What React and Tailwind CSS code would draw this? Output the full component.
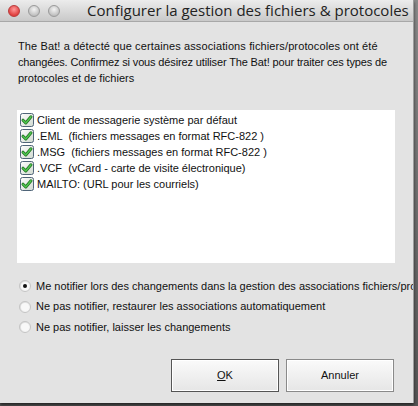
const items = [
  'Client de messagerie système par défaut',
  '.EML  (fichiers messages en format RFC-822 )',
  '.MSG  (fichiers messages en format RFC-822 )',
  '.VCF  (vCard - carte de visite électronique)',
  'MAILTO: (URL pour les courriels)',
]

const radios = [
  'Me notifier lors des changements dans la gestion des associations fichiers/protocoles',
  'Ne pas notifier, restaurer les associations automatiquement',
  'Ne pas notifier, laisser les changements',
]

const CheckBox = () => (
  <svg width="14" height="14" viewBox="0 0 14 14" className="shrink-0">
    <defs>
      <linearGradient id="cbg" x1="0" y1="0" x2="1" y2="1">
        <stop offset="0" stopColor="#ffffff" />
        <stop offset="1" stopColor="#cfd8cf" />
      </linearGradient>
    </defs>
    <rect x="0.5" y="0.5" width="13" height="13" rx="2" fill="url(#cbg)" stroke="#4f6478" />
    <path d="M3 7.2 L5.8 10 L11 3.8" fill="none" stroke="#1d6b1d" strokeWidth="3" strokeLinecap="round" strokeLinejoin="round" />
    <path d="M3 7.2 L5.8 10 L11 3.8" fill="none" stroke="#4fc64f" strokeWidth="1.6" strokeLinecap="round" strokeLinejoin="round" />
  </svg>
)

const Radio = ({ on }) => (
  <svg width="12" height="12" viewBox="0 0 12 12" className="shrink-0">
    <defs>
      <linearGradient id="rbg" x1="0" y1="0" x2="1" y2="1">
        <stop offset="0" stopColor="#d6d6d6" />
        <stop offset="1" stopColor="#ffffff" />
      </linearGradient>
    </defs>
    <circle cx="6" cy="6" r="5.5" fill="url(#rbg)" stroke="#c4c4c4" />
    <circle cx="6" cy="6" r="4" fill="#f8f8f8" />
    {on && <circle cx="6" cy="6" r="2" fill="#111" />}
  </svg>
)

const Light = ({ color }) => (
  <span
    className={`block h-[12px] w-[12px] rounded-full border ${
      color === 'red'
        ? 'border-[#b93a3a] bg-[radial-gradient(circle_at_50%_35%,#ff9a9a,#e0403f_70%)]'
        : 'border-[#9a9a9a] bg-[radial-gradient(circle_at_50%_35%,#f4f4f4,#bdbdbd_75%)]'
    }`}
  />
)

export default function App() {
  return (
    <div className="flex h-[406px] w-[418px] flex-col bg-gradient-to-b from-[#8a8a8a] to-[#555] [font-family:'Liberation_Sans',Arial,sans-serif]">
      <div className="flex h-[403px] w-[414px] flex-col overflow-hidden border-r border-[#9c9c9c] bg-[#e3e3e3] shadow-[0_2px_3px_rgba(0,0,0,0.6)]">
        <div className="relative flex h-[22px] shrink-0 items-center border-b border-[#a8a8a8] bg-gradient-to-b from-[#ececec] to-[#c9c9c9] pl-[8px]">
          <div className="flex gap-[8px]">
            <Light color="red" />
            <Light />
            <Light />
          </div>
          <div className="ml-[27px] text-[15px] leading-none text-[#222] [font-family:'Open_Sans','Liberation_Sans',sans-serif]">
            Configurer la gestion des fichiers &amp; protocoles
          </div>
        </div>

        <div className="flex flex-col whitespace-nowrap pl-[18px] pt-[16px] text-[11px] leading-[16px] text-[#111]">
          <span className="tracking-[0.12px]">The Bat! a détecté que certaines associations fichiers/protocoles ont été</span>
          <span className="tracking-[-0.14px]">changées. Confirmez si vous désirez utiliser The Bat! pour traiter ces types de</span>
          <span>protocoles et de fichiers</span>
        </div>

        <div className="ml-[17px] mt-[24px] flex h-[153px] w-[378px] flex-col bg-white pl-[3px] pt-[2px]">
          {items.map((t) => (
            <div key={t} className="flex h-[16px] items-center gap-[3px] whitespace-pre text-[11px] text-[#111]">
              <CheckBox />
              <span>{t}</span>
            </div>
          ))}
        </div>

        <div className="mt-[17px] flex flex-col gap-[8.5px] pl-[19px]">
          {radios.map((t, i) => (
            <div key={t} className="flex h-[12px] items-center gap-[5px] whitespace-nowrap text-[11px] text-[#111]">
              <Radio on={i === 0} />
              <span>{t}</span>
            </div>
          ))}
        </div>

        <div className="mb-[11px] mt-auto flex justify-end gap-[7px] pr-[19px]">
          <button className="h-[33px] w-[108px] border border-[#555] bg-gradient-to-b from-[#fafafa] to-[#e6e6e6] text-[11px] text-[#111] shadow-[inset_0_0_0_1px_#fff]">
            <span className="underline">O</span>K
          </button>
          <button className="h-[33px] w-[108px] border border-[#8a8a8a] bg-gradient-to-b from-[#fafafa] to-[#e6e6e6] text-[11px] text-[#111] shadow-[inset_0_0_0_1px_#fff]">
            Annuler
          </button>
        </div>
      </div>
    </div>
  )
}
